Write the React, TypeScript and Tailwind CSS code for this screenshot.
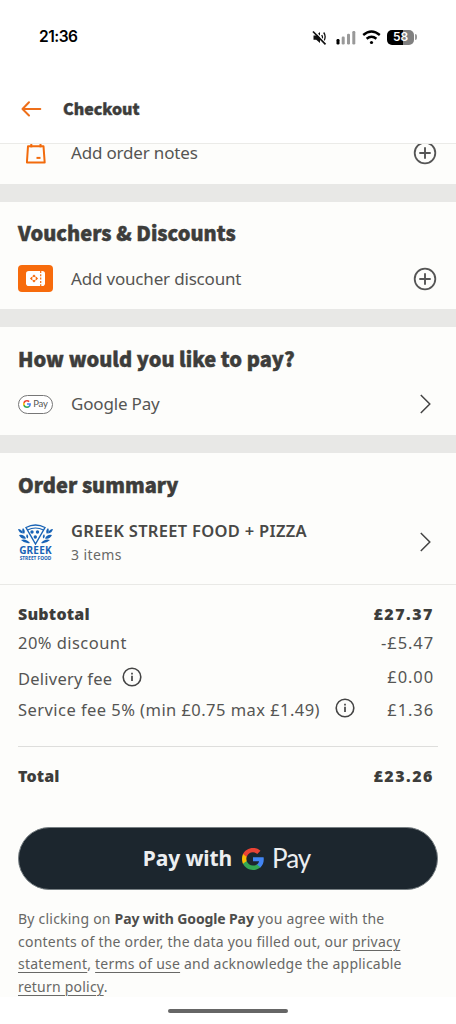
import type { ReactNode } from "react";

const SHAPES = {
  blue: "M47.5 24.5c0-1.6-.1-3.1-.4-4.5H24v9.1h13.2c-.6 3-2.3 5.600-4.900 7.300v6h7.900c4.600-4.300 7.300-10.500 7.300-17.900z",
  green: "M24 48c6.600 0 12.100-2.200 16.200-5.900l-7.900-6c-2.200 1.500-5 2.300-8.300 2.300-6.400 0-11.800-4.300-13.700-10.100H2.100v6.200C6.200 42.600 14.400 48 24 48z",
  yellow: "M10.300 28.300c-.5-1.500-.8-3-.8-4.600s.3-3.200.8-4.600v-6.200H2.100C.5 16.300 0 20 0 23.700s.5 7.500 2.100 10.800z",
  red: "M24 9.500c3.600 0 6.800 1.200 9.300 3.600l7-7C36.100 2.200 30.600 0 24 0 14.400 0 6.200 5.300 2.100 13.200l8.200 6.200C12.200 13.700 17.600 9.500 24 9.500z",
};

function GoogleG({ className }: { className: string }) {
  return (
    <svg viewBox="0 0 48 48" className={className}>
      <path fill="#4285f4" d={SHAPES.blue} />
      <path fill="#34a853" d={SHAPES.green} />
      <path fill="#fbbc05" d={SHAPES.yellow} />
      <path fill="#ea4335" d={SHAPES.red} />
    </svg>
  );
}

function BackArrow() {
  return (
    <svg width="22" height="18" viewBox="0 0 22 18" fill="none" stroke="#ee6f1a" strokeWidth="2" strokeLinecap="round" strokeLinejoin="round">
      <path d="M20.300 9H2.500M9 2.300L2.500 9 9 15.500" />
    </svg>
  );
}

function PlusCircle() {
  return (
    <svg width="24" height="24" viewBox="0 0 24 24" fill="none" stroke="#555" className="shrink-0">
      <circle cx="12" cy="12" r="10.3" strokeWidth="1.800" />
      <path d="M12 6.300v11.400M6.300 12h11.400" strokeWidth="1.900" />
    </svg>
  );
}

function Chevron() {
  return (
    <svg width="24" height="24" viewBox="0 0 24 24" fill="none" stroke="#444" strokeWidth="1.500" className="shrink-0">
      <path d="M7.800 3l9 9-9 9" />
    </svg>
  );
}

function InfoIcon() {
  return (
    <svg width="20" height="20" viewBox="0 0 20 20" fill="none" stroke="#444" className="shrink-0">
      <circle cx="10" cy="10" r="8.800" strokeWidth="1.600" />
      <path d="M10 8.800v5.200M10 5.800v1.700" strokeWidth="1.700" />
    </svg>
  );
}

function StatusBar() {
  return (
    <div className="flex h-[74px] items-center justify-between pr-[39px] pl-[39px]">
      <span className="font-[Inter] text-[15.500px] font-semibold tracking-[-0.500px] text-black">21:36</span>
      <div className="flex items-center">
        {/* Muted speaker */}
        <svg width="15" height="15" viewBox="0 0 15 15" className="mr-[9px]">
          <path d="M1.500 5.500h2.700L8 2v11L4.200 9.800H1.500z" fill="#111" />
          <path d="M9.700 5q1.500 2.200 0 4.500M11.700 2.500q2.900 4 0 9" fill="none" stroke="#111" strokeWidth="1.300" />
          <path d="M2.500.8l12 13" stroke="#fff" strokeWidth="1.300" />
          <path d="M1 1.500l12.500 12.800" stroke="#111" strokeWidth="1.700" />
        </svg>
        <svg width="20" height="15" viewBox="0 0 20 15" className="mr-[6px]">
          <rect x="0.500" y="9" width="3" height="5.500" rx="1.200" fill="#000" />
          <rect x="5.700" y="6.500" width="3" height="8" rx="1.200" fill="#999" />
          <rect x="11" y="3.700" width="3" height="10.800" rx="1.200" fill="#999" />
          <rect x="16.300" y="1" width="3" height="13.500" rx="1.200" fill="#999" />
        </svg>
        <svg width="19" height="15" viewBox="0 0 19 15" className="mr-[6px]" fill="none" stroke="#000" strokeWidth="2.400">
          <path d="M1.200 5q8.300-7 16.600 0M4.600 8.700q4.900-4 9.800 0" />
          <circle cx="9.500" cy="12.500" r="1.600" fill="#000" stroke="none" />
        </svg>
        <span className="flex h-[15px] w-[27px] items-center justify-center rounded-[5px] bg-linear-to-r from-black from-58% to-[#808080] to-58% font-[Inter] text-[12px] font-semibold text-white">
          58
        </span>
        <span className="ml-px h-[6px] w-[2px] rounded-r bg-[#999]" />
      </div>
    </div>
  );
}

function NotesIcon() {
  return (
    <svg width="20" height="21" viewBox="0 0 20 21" fill="none" stroke="#f26b0c" strokeWidth="2" strokeLinejoin="round">
      <path d="M2 3.200h15.500l1.200 16.300H.9zM5.300 0v4.500M14.500 0v4.500" />
      <path d="M10.500 14.900h4" strokeWidth="2" />
    </svg>
  );
}

function VoucherIcon() {
  return (
    <span className="flex h-[27px] w-[35px] items-center justify-center rounded-[4px] bg-[#f76b0c]">
      <svg width="19" height="15" viewBox="0 0 19 15">
        <rect width="19" height="15" rx="2.800" fill="#fff" />
        <path d="M14.700 0v15" stroke="#f76b0c" strokeWidth="1.200" strokeDasharray="2 1.300" />
        <path d="M8 4.500l3 3-3 3-3-3z" fill="none" stroke="#f76b0c" strokeWidth="1.500" strokeDasharray="3.500 0.743" strokeDashoffset="1.750" />
      </svg>
    </span>
  );
}

function RestaurantLogo() {
  return (
    <div className="flex h-[37px] w-[35px] flex-col items-center text-[#1762b5]">
      <svg width="35" height="21" viewBox="0 0 35 21" fill="none" stroke="currentColor" className="shrink-0">
        <path d="M8 3.500q9.500-5 19 0L17.500 20z" strokeWidth="1.400" />
        <path d="M9.500 6q8-4 16 0" strokeWidth="1.200" />
        <g fill="currentColor" stroke="none">
          <circle cx="14" cy="8" r="1.700" />
          <circle cx="19.500" cy="8" r="1.700" />
          <circle cx="17.300" cy="13" r="1.700" />
          <path d="M0 5q4 0 5 4.500Q1 9 0 5zM5 4q3 3 1 6Q3 7 5 4zM1 11q5-1 7 3.500Q3 15.500 1 11zM9 10q2 2 1 4.500Q7 13 9 10zM3 16q5-2 9 3Q7 20 3 16z" />
          <path d="M35 5q-4 0-5 4.500Q34 9 35 5zM30 4q-3 3-1 6Q32 7 30 4zM34 11q-5-1-7 3.500Q32 15.500 34 11zM26 10q-2 2-1 4.500Q28 13 26 10zM32 16q-5-2-9 3Q28 20 32 16z" />
        </g>
      </svg>
      <span className="text-[10px] leading-[10px] font-bold tracking-[0.200px]">GREEK</span>
      <span className="text-[4.800px] leading-[6px] font-bold whitespace-nowrap">STREET FOOD</span>
    </div>
  );
}

function Row({ icon, label, action }: { icon: ReactNode; label: string; action: ReactNode }) {
  return (
    <div className="flex items-center pr-[19px] pl-[18px]">
      <span className="flex w-[53px] shrink-0">{icon}</span>
      <span className="flex-1 text-[17px] leading-[18px] tracking-[-0.180px]">{label}</span>
      {action}
    </div>
  );
}

function Heading({ children }: { children: ReactNode }) {
  return (
    <h2 className="pl-[18px] font-['Noto_Sans_CJK_SC',sans-serif] text-[20px] leading-7 font-black tracking-[0.030px] text-[#3d3d3b] [-webkit-text-stroke:0.5px]">
      {children}
    </h2>
  );
}

const LINK = "underline decoration-1 underline-offset-3";

export default function App() {
  return (
    <div className="flex h-[1024px] w-[456px] flex-col overflow-hidden bg-white font-['Noto_Sans',sans-serif] text-[#555553]">
      <header className="h-[144px] shrink-0 border-b border-[#ebebe8]">
        <StatusBar />
        <div className="flex h-[70px] items-center pl-[20px]">
          <BackArrow />
          <h1 className="ml-[21px] pb-[3px] font-['Noto_Sans_CJK_SC',sans-serif] text-[16px] font-black text-[#3d3d3b] [-webkit-text-stroke:0.4px]">
            Checkout
          </h1>
        </div>
      </header>

      <main className="h-[853px] shrink-0 overflow-hidden bg-[#fdfdfb]">
        <section className="-mt-[3px] h-[43px]">
          <Row icon={<span className="ml-[8px]"><NotesIcon /></span>} label="Add order notes" action={<PlusCircle />} />
        </section>
        <div className="h-[18px] bg-[#e8e8e6]" />

        <section className="flex h-[107px] flex-col gap-[18px] pt-[17px]">
          <Heading>Vouchers &amp; Discounts</Heading>
          <Row icon={<VoucherIcon />} label="Add voucher discount" action={<PlusCircle />} />
        </section>
        <div className="h-[18px] bg-[#e8e8e6]" />

        <section className="flex h-[108px] flex-col gap-[19px] pt-[18px]">
          <Heading>How would you like to pay?</Heading>
          <Row
            icon={
              <span className="flex h-[19px] w-[35px] items-center justify-center gap-[2px] rounded-full border border-[#777] bg-white font-[Lato] text-[9.500px] leading-none tracking-[-0.200px]">
                <GoogleG className="size-[8px]" />
                Pay
              </span>
            }
            label="Google Pay"
            action={<Chevron />}
          />
        </section>
        <div className="h-[18px] bg-[#e8e8e6]" />

        <section className="h-[132px] border-b border-[#e9e9e6] pt-[18px]">
          <Heading>Order summary</Heading>
          <div className="mt-[19px] flex items-center pr-[19px] pl-[18px]">
            <span className="w-[53px] shrink-0"><RestaurantLogo /></span>
            <div className="flex-1 pt-px">
              <p className="text-[16.500px] leading-6 font-semibold tracking-[0.300px] text-[#484846]">GREEK STREET FOOD + PIZZA</p>
              <p className="text-[14px] leading-6 tracking-[0.400px] text-[#696967]">3 items</p>
            </div>
            <span className="pb-px"><Chevron /></span>
          </div>
        </section>

        <section className="mx-[18px] h-[162px] border-b border-[#dededc] pt-[17px] pr-[4px] text-[16.500px] leading-6 tracking-[0.450px]">
          <div className="flex justify-between font-black text-[#3d3d3b]">
            <span className="text-[16px] tracking-[0.200px]">Subtotal</span>
            <span className="text-[16px] tracking-[1.500px]">£27.37</span>
          </div>
          <div className="mt-[5px] flex justify-between">
            <span>20% discount</span>
            <span className="tracking-[0.900px]">-£5.47</span>
          </div>
          <div className="mt-[10px] flex justify-between">
            <span className="flex gap-[10px]">
              <span className="pt-[2px] tracking-[0.250px]">Delivery fee</span>
              <span className="pt-[2px]"><InfoIcon /></span>
            </span>
            <span className="tracking-[0.900px]">£0.00</span>
          </div>
          <div className="mt-[7px] flex">
            <span>Service fee 5% (min £0.75 max £1.49)</span>
            <span className="mr-[32px] ml-auto"><InfoIcon /></span>
            <span className="tracking-[0.900px]">£1.36</span>
          </div>
        </section>

        <div className="mt-[17px] flex justify-between pr-[22px] pl-[18px] text-[16px] leading-6 font-black text-[#3d3d3b]">
          <span className="tracking-[0.100px]">Total</span>
          <span className="tracking-[1.500px]">£23.26</span>
        </div>

        <button className="mx-[18px] mt-[39px] flex h-[63px] w-[420px] items-center justify-center rounded-full border border-[#777f83] bg-[#1c262e] pr-[3px] text-[21px] font-bold tracking-[-0.100px] text-[#eceef0]">
          Pay with
          <GoogleG className="mr-[8px] ml-[10px] size-[22px]" />
          <span className="font-[Lato] text-[26px] font-normal tracking-[-1px]">Pay</span>
        </button>

        <p className="mt-[18px] pl-[18px] text-[14px] leading-[22.500px] tracking-[0.220px] whitespace-nowrap text-[#686866]">
          By clicking on <b className="tracking-[-0.120px] text-[#4d4d4b]">Pay with Google Pay</b> you agree with the
          <br />
          contents of the order, the data you filled out, our <a className={LINK}>privacy</a>
          <br />
          <a className={LINK}>statement</a>, <a className={LINK}>terms of use</a> and acknowledge the applicable
          <br />
          <a className={LINK}>return policy</a>.
        </p>
      </main>

      <div className="mx-auto mt-[12px] h-[4px] w-[120px] shrink-0 rounded-full bg-[#666]" />
    </div>
  );
}
